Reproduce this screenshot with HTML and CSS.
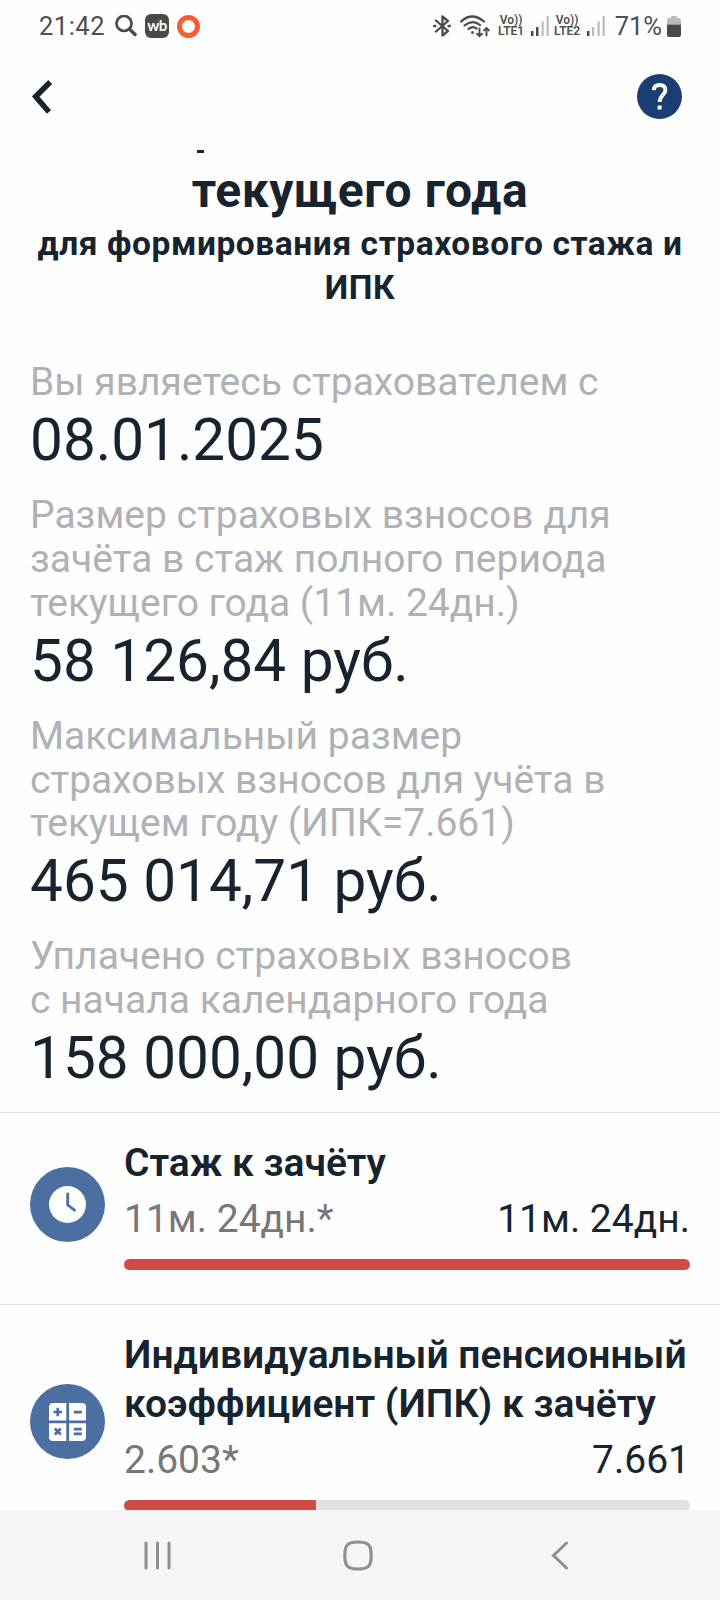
FILE: index.html
```html
<!DOCTYPE html>
<html lang="ru">
<head>
    <meta charset="UTF-8">
    <meta name="viewport" content="width=device-width, initial-scale=1.0">
    <title>Взносы текущего года</title>
    <link rel="stylesheet" href="styles.css">
</head>
<body>
    <div class="status-bar">
        <span class="time">21:42</span>
        <svg class="search" width="22" height="22" viewBox="0 0 22 22" fill="none" stroke="#4a4a4a">
            <circle cx="9" cy="8.5" r="7.5" stroke-width="2.7"/>
            <path d="M14.5 14l5.500 5.500" stroke-width="3.500" stroke-linecap="round"/>
        </svg>
        <span class="wb">wb</span>
        <span class="ring"></span>
        <svg class="bluetooth" width="18" height="22" viewBox="0 0 18 22" fill="none" stroke="#4a4a4a" stroke-width="2.3" stroke-linejoin="round" stroke-linecap="round">
            <path d="M3 5.500l12 10.500-5.500 4.500V1.500L15 6 3 16.500"/>
            <path d="M1.300 11h1M15.700 11h1" stroke-width="2.600"/>
        </svg>
        <svg class="wifi" width="30" height="23" viewBox="0 0 30 23" fill="none" stroke="#4a4a4a" stroke-width="2.2" stroke-linecap="round">
            <path d="M1 6.500Q12-3.500 24 6.500M4.500 10.500Q12.500 4 20 10M8.500 14Q12.500 10.500 16.500 13.500"/>
            <circle cx="12.500" cy="17.500" r="1.400" fill="#4a4a4a" stroke="none"/>
            <path d="M19.500 13.500v7.500M17 18.800l2.500 2.400 2.500-2.400M26.500 20.500V13M24 15.400l2.500-2.400 2.500 2.400" stroke-width="1.900"/>
        </svg>
        <div class="lte"><span>Vo))</span><span>LTE1</span></div>
        <svg class="signal" width="18" height="20" viewBox="0 0 18 20">
            <path d="M0 15h2.500v5H0zM5 11h2.500v9H5z" fill="#4a4a4a"/>
            <path d="M10.500 5.500h2.200V20h-2.200zM15.600 0h2.200v20h-2.200z" fill="#bcbcbc"/>
        </svg>
        <div class="lte lte2"><span>Vo))</span><span>LTE2</span></div>
        <svg class="signal" width="18" height="20" viewBox="0 0 18 20">
            <path d="M0 15h2.500v5H0z" fill="#4a4a4a"/>
            <path d="M5 11h2.200v9H5zM10.500 5.500h2.200V20h-2.200zM15.600 0h2.200v20h-2.200z" fill="#bcbcbc"/>
        </svg>
        <span class="percent">71%</span>
        <svg class="battery" width="14" height="21" viewBox="0 0 14 21">
            <path d="M4 1q0-1 1-1h4q1 0 1 1v1h2q2 0 2 2v4.500H0V4q0-2 2-2h2z" fill="#bcbcbc"/>
            <path d="M0 8.500h14V19q0 2-2 2H2q-2 0-2-2z" fill="#4a4a4a"/>
        </svg>
    </div>

    <div class="app-bar">
        <svg width="21" height="34" viewBox="0 0 21 34" fill="none" stroke="#182330" stroke-width="5.500">
            <path d="M18.200 2L3.700 16.500 17 32"/>
        </svg>
        <div class="help">
            <svg width="45" height="45" viewBox="0 0 45 45">
                <path d="M16.700 16.200Q17 11 22.700 11T28.400 16.200C28.400 20.500 22.700 21.500 22.700 28" fill="none" stroke="#fff" stroke-width="3.900"/>
                <path d="M20.600 31.500h4v4h-4z" fill="#fff"/>
            </svg>
        </div>
    </div>

    <div class="content">
        <div class="cut-line"></div>
        <h1>текущего года</h1>
        <h2>для формирования страхового стажа и<br>ИПК</h2>

        <div class="info">
            <div class="item">
                <div class="label">Вы являетесь страхователем с</div>
                <div class="value">08.01.2025</div>
            </div>
            <div class="item">
                <div class="label">Размер страховых взносов для<br>зачёта в стаж полного периода<br>текущего года (11м. 24дн.)</div>
                <div class="value">58 126,84 руб.</div>
            </div>
            <div class="item">
                <div class="label">Максимальный размер<br>страховых взносов для учёта в<br>текущем году (ИПК=7.661)</div>
                <div class="value">465 014,71 руб.</div>
            </div>
            <div class="item">
                <div class="label">Уплачено страховых взносов<br>с начала календарного года</div>
                <div class="value">158 000,00 руб.</div>
            </div>
        </div>

        <div class="card">
            <div class="icon">
                <svg width="37" height="37" viewBox="0 0 37 37">
                    <circle cx="18.500" cy="18.500" r="18.500" fill="#fff"/>
                    <path d="M18.700 8v11l6.800 5.200" fill="none" stroke="#4b6fa1" stroke-width="2.800" stroke-linecap="round" stroke-linejoin="round"/>
                </svg>
            </div>
            <div class="card-body">
                <div class="card-title">Стаж к зачёту</div>
                <div class="card-row"><span class="current">11м. 24дн.*</span><span>11м. 24дн.</span></div>
                <div class="bar"><div class="fill" style="width: 100%"></div></div>
            </div>
        </div>

        <div class="card ipk">
            <div class="icon">
                <svg width="37" height="38" viewBox="0 0 37 38">
                    <rect width="37" height="38" rx="4" fill="#fff"/>
                    <g fill="none" stroke="#4b6fa1" stroke-width="2.800">
                        <path d="M18.700 0v38M0 18.800h37"/>
                        <path d="M4.500 9h8.500M8.800 4.800v8.500M24.800 9.200h8M5.800 25.500l6 6M11.800 25.500l-6 6M24.800 26.200h8M24.800 30.800h8" stroke-width="2.700"/>
                    </g>
                </svg>
            </div>
            <div class="card-body">
                <div class="card-title">Индивидуальный пенсионный<br>коэффициент (ИПК) к зачёту</div>
                <div class="card-row"><span class="current">2.603*</span><span>7.661</span></div>
                <div class="bar"><div class="fill" style="width: 33.98%"></div></div>
            </div>
        </div>
    </div>

    <div class="nav-bar">
        <svg width="27" height="29" viewBox="0 0 27 29" fill="none" stroke="#909090" stroke-width="3" stroke-linecap="round">
            <path d="M2 2v25M13.500 2v25M25 2v25"/>
        </svg>
        <svg class="home" width="30" height="31" viewBox="0 0 30 31" fill="none" stroke="#909090" stroke-width="3.200">
            <path d="M15 2C25 2 28.200 4.500 28.200 15.500S25 29 15 29 1.800 26.500 1.800 15.500 5 2 15 2z"/>
        </svg>
        <svg width="18" height="29" viewBox="0 0 18 29" fill="none" stroke="#909090" stroke-width="3" stroke-linecap="round">
            <path d="M15.500 2L2.500 14.500l13 12.500"/>
        </svg>
    </div>
</body>
</html>
```
FILE: styles.css
```css
* {
    box-sizing: border-box;
}
body {
    font-family: Roboto, sans-serif;
    margin: 0;
    height: 1600px;
    background-color: #fefefe;
    color: #182330;
    display: flex;
    flex-direction: column;
    overflow: hidden;
}
svg {
    display: block;
    flex: none;
}
.status-bar {
    height: 52px;
    padding: 0 39px;
    display: flex;
    align-items: center;
    color: #4f4f4f;
    font-size: 25.5px;
    flex: none;
}
.time {
    letter-spacing: 0.5px;
}
.search {
    margin-left: 10px;
}
.wb {
    width: 24px;
    height: 24px;
    margin-left: 8px;
    border-radius: 6px;
    background-color: #4a4a4a;
    color: white;
    font: 700 15px/23px Lato, sans-serif;
    letter-spacing: -0.5px;
    text-align: center;
}
.ring {
    width: 23px;
    height: 23px;
    margin-left: 8px;
    border: 5px solid #f95c32;
    border-radius: 50%;
}
.bluetooth {
    margin-left: auto;
}
.wifi {
    margin-left: 9px;
}
.lte {
    width: 27px;
    margin-left: 8px;
    display: flex;
    flex-direction: column;
    align-items: center;
    font-size: 12px;
    font-weight: 600;
    line-height: 11px;
}
.signal {
    margin-left: 6px;
}
.lte2 {
    margin-left: 5px;
}
.percent {
    margin-left: 10px;
}
.battery {
    margin-left: 5px;
}
.app-bar {
    height: 98px;
    padding: 22px 38px 0 32px;
    display: flex;
    justify-content: space-between;
    flex: none;
}
.app-bar > svg {
    margin-top: 6px;
}
.help {
    width: 45px;
    height: 45px;
    border-radius: 50%;
    background-color: #1b3d73;
}
.content {
    flex: 1;
    min-height: 0;
    overflow: hidden;
}
/* bottom of the title line scrolled under the app bar */
.cut-line {
    width: 7px;
    height: 3px;
    margin-left: 197px;
    background-color: #182330;
}
h1 {
    margin: 8px 0 0;
    font-size: 48px;
    line-height: 60px;
    letter-spacing: 0.6px;
    text-align: center;
}
h2 {
    margin: 1px 0 0;
    font-size: 33.5px;
    line-height: 44px;
    letter-spacing: 0.57px;
    text-align: center;
    white-space: nowrap;
}
.info {
    padding: 51px 30px 0;
    height: 802px;
}
.item {
    margin-bottom: 20px;
}
.label {
    color: #b0b1b5;
    font-size: 39px;
    line-height: 43.9px;
}
.value {
    margin-top: 1px;
    font-size: 58.5px;
    line-height: 68px;
}
.card {
    height: 192px;
    padding: 26px 30px 0;
    border-top: 1px solid #e0e0e0;
    display: flex;
    gap: 19px;
}
.icon {
    width: 75px;
    height: 75px;
    margin-top: 28px;
    border-radius: 50%;
    background-color: #4b6fa1;
    display: flex;
    align-items: center;
    justify-content: center;
    flex: none;
}
.ipk .icon {
    margin-top: 53px;
}
.card-body {
    flex: 1;
}
.card-title {
    font-size: 39px;
    font-weight: 600;
    line-height: 49px;
    white-space: nowrap;
}
.card-row {
    margin-top: 7px;
    display: flex;
    justify-content: space-between;
    font-size: 39px;
    line-height: 49px;
}
.current {
    color: #777777;
}
.bar {
    height: 11px;
    margin-top: 15px;
    border-radius: 5.5px;
    background-color: #e1e1e1;
    overflow: hidden;
}
.fill {
    height: 100%;
    background-color: #d04b44;
}
.nav-bar {
    height: 90px;
    padding: 0 151px 0 144px;
    background-color: #f5f5f5;
    display: flex;
    align-items: center;
    justify-content: space-between;
    flex: none;
}
.home {
    margin-right: 6px;
}
```
